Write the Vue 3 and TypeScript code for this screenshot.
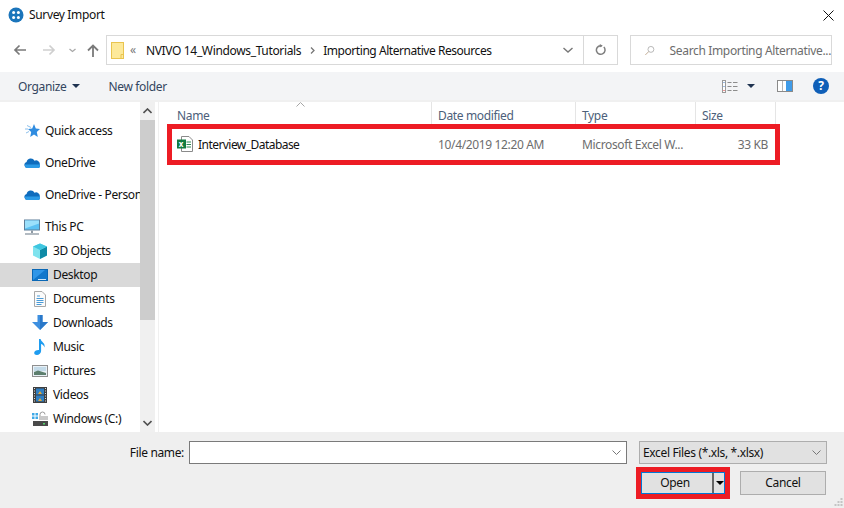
<script setup lang="ts">
type NavItem = { label: string; icon: string; indent?: boolean; group?: boolean; active?: boolean };

const navItems: NavItem[] = [
  { label: "Quick access", icon: "star" },
  { label: "OneDrive", icon: "cloud", group: true },
  { label: "OneDrive - Personal", icon: "cloud", group: true },
  { label: "This PC", icon: "pc", group: true },
  { label: "3D Objects", icon: "cube", indent: true },
  { label: "Desktop", icon: "desktop", indent: true, active: true },
  { label: "Documents", icon: "doc", indent: true },
  { label: "Downloads", icon: "down", indent: true },
  { label: "Music", icon: "music", indent: true },
  { label: "Pictures", icon: "picture", indent: true },
  { label: "Videos", icon: "video", indent: true },
  { label: "Windows (C:)", icon: "drive", indent: true },
];
</script>

<template>
  <div class="dialog">
    <header class="titlebar">
      <svg class="app-icon" width="16" height="16" viewBox="0 0 16 16">
        <circle cx="8" cy="8" r="7.5" fill="#1b75bb" />
        <circle cx="5.6" cy="5.6" r="1.5" fill="#fff" />
        <circle cx="10.4" cy="5.6" r="1.5" fill="#fff" />
        <circle cx="5.6" cy="10.4" r="1.5" fill="#fff" />
        <circle cx="10.4" cy="10.4" r="1.5" fill="#fff" />
      </svg>
      <span class="title">Survey Import</span>
      <svg class="close" width="11" height="11" viewBox="0 0 11 11">
        <path d="M.5.5l10 10M10.5.5l-10 10" stroke="#111" stroke-width="1" fill="none" />
      </svg>
    </header>

    <div class="navbar">
      <div class="nav-buttons">
        <svg width="13" height="12" viewBox="0 0 13 12" class="back">
          <path d="M13 6H2M6.500 1.500L2 6l4.500 4.500" stroke="#7a7a7a" stroke-width="1.700" fill="none" />
        </svg>
        <svg width="13" height="12" viewBox="0 0 13 12" class="forward">
          <path d="M0 6h11M6.500 1.500L11 6l-4.500 4.500" stroke="#cfcfcf" stroke-width="1.700" fill="none" />
        </svg>
        <svg width="7" height="5" viewBox="0 0 7 5" class="recent">
          <path d="M.5 1l3 2.500 3-2.500" stroke="#a8a8a8" stroke-width="1.300" fill="none" />
        </svg>
        <svg width="12" height="13" viewBox="0 0 12 13" class="up">
          <path d="M6 13V2M1 6.500L6 1.500l5 5" stroke="#7a7a7a" stroke-width="1.800" fill="none" />
        </svg>
      </div>
      <div class="address">
        <svg class="folder" width="13" height="17" viewBox="0 0 13 17">
          <rect x=".5" y=".5" width="12" height="16" fill="#fde99a" stroke="#e9c44f" />
          <path d="M10 16.500v-4h2.500" fill="none" stroke="#e9c44f" />
        </svg>
        <span class="chevrons">«</span>
        <span class="crumb">NVIVO 14_Windows_Tutorials</span>
        <svg class="sep" width="5" height="7" viewBox="0 0 5 7">
          <path d="M1 .5l3 3-3 3" stroke="#777" stroke-width="1.300" fill="none" />
        </svg>
        <span class="crumb crumb-last">Importing Alternative Resources</span>
        <svg class="addr-drop" width="10" height="6" viewBox="0 0 10 6">
          <path d="M.5 1l4.500 4 4.500-4" stroke="#777" stroke-width="1.400" fill="none" />
        </svg>
        <div class="refresh">
          <svg width="11" height="12" viewBox="0 0 11 12">
            <path d="M8.800 3a4.300 4.300 0 1 1-3.300-1.300H7" stroke="#7f7f7f" stroke-width="1.500" fill="none" />
            <path d="M4.800 0l3 1.800-3 1.800z" fill="#7f7f7f" />
          </svg>
        </div>
      </div>
      <div class="search">
        <svg width="13" height="13" viewBox="0 0 13 13">
          <circle cx="8" cy="5" r="4" stroke="#a0a0a0" fill="none" />
          <path d="M5 8l-4.500 4.500" stroke="#b59a7c" stroke-width="1.100" />
        </svg>
        <span>Search Importing Alternative...</span>
      </div>
    </div>

    <div class="toolbar">
      <span class="tool">Organize</span>
      <i class="caret organize-caret"></i>
      <span class="tool new-folder">New folder</span>
      <div class="tool-right">
        <svg width="16" height="13" viewBox="0 0 16 13">
          <rect x=".5" y=".5" width="3" height="12" fill="#fff" stroke="#9a9a9a" />
          <rect x="1.500" y="2" width="1" height="1" fill="#3b78c4" />
          <rect x="1.500" y="6" width="1" height="1" fill="#3b78c4" />
          <rect x="1.500" y="10" width="1" height="1" fill="#d33" />
          <path d="M5.500 2.500h4M11 2.500h4.500M5.500 6.500h4M11 6.500h4.500M5.500 10.500h4M11 10.500h4.500" stroke="#8c8c8c" />
        </svg>
        <i class="caret view-caret"></i>
        <svg class="pane" width="16" height="12" viewBox="0 0 16 12">
          <rect x=".5" y=".5" width="15" height="11" fill="#fff" stroke="#8a8a8a" />
          <rect x="9" y="1" width="6" height="10" fill="#3f9be8" />
          <path d="M5.500 1v10" stroke="#b5b5b5" />
        </svg>
        <div class="help">?</div>
      </div>
    </div>

    <main class="body">
      <aside class="sidebar">
        <ul class="nav-list">
          <li
            v-for="item in navItems"
            :key="item.label"
            class="nav-item"
            :class="{ indent: item.indent, group: item.group, active: item.active }"
          >
            <svg class="nav-icon" width="16" height="16" viewBox="0 0 16 16">
              <template v-if="item.icon === 'star'">
                <path d="M10 1l1.800 4.500L16 6l-3.200 3 1 5L10 11.500 6.200 14l1-5L4 6l4.200-.5z" fill="#2f8ce0" />
                <path d="M3 2.500l4 2M1 6h3M2 10l3-1.500" stroke="#8cc0ec" />
              </template>
              <template v-else-if="item.icon === 'cloud'">
                <path d="M3.200 13A3 3 0 0 1 2.600 7.100 4.200 4.200 0 0 1 10.500 5.700 3.800 3.800 0 0 1 15.800 9.800 2.200 2.200 0 0 1 14 13z" fill="#0f6cbd" />
                <path d="M3.200 13A3 3 0 0 1 1 9.500h14.900A2.300 2.300 0 0 1 14 13z" fill="#2b9ae6" />
              </template>
              <template v-else-if="item.icon === 'pc'">
                <rect x=".5" y="1" width="15" height="10" fill="#5cc1f2" stroke="#5f7f99" />
                <path d="M1 1.500h14v3L1 9.500z" fill="#9be0fb" />
                <path d="M8 11.500v2.500" stroke="#8e9aa5" stroke-width="2" />
                <path d="M1 15h14" stroke="#9aa5ae" stroke-width="1.500" />
              </template>
              <template v-else-if="item.icon === 'cube'">
                <path d="M8 .5l7 3v9l-7 3.500-7-3.500v-9z" fill="#7fe3ee" />
                <path d="M8 7l7-3.500v9L8 16z" fill="#0e8aa6" />
                <path d="M8 7L1 3.500 8 .5l7 3z" fill="#3fc6e0" />
              </template>
              <template v-else-if="item.icon === 'desktop'">
                <rect x=".5" y="2.500" width="15" height="11" fill="#2f96e8" stroke="#0a67b5" />
                <path d="M1 13L13 3h2v10z" fill="#1177cc" />
                <path d="M6 12.500h8" stroke="#cfe8fb" />
              </template>
              <template v-else-if="item.icon === 'doc'">
                <path d="M2.500.5H10L13.500 4v11.500h-11z" fill="#fbfbfb" stroke="#a8a8a8" />
                <path d="M5 5h3M4.500 7.500h7M4.500 9.500h7M4.500 11.500h7M4.500 13.500h5" stroke="#4a9bd8" />
              </template>
              <template v-else-if="item.icon === 'down'">
                <path d="M5.500 0h5v7H16l-8 8-8-8h5.500z" fill="#3d8fe0" />
                <path d="M8 0h2.500v7H16l-8 8z" fill="#2a78c9" />
              </template>
              <template v-else-if="item.icon === 'music'">
                <path d="M7 0h1.600c.5 3.200 5 3.700 3.900 8.500-.6-2.100-2.400-3.300-3.400-3.500V12c0 2.200-2 4-4.200 4-1.700 0-2.700-1-2.700-2.300C2.200 12 4.500 10.800 7 11z" fill="#1e9cf0" />
              </template>
              <template v-else-if="item.icon === 'picture'">
                <rect x=".5" y="2.500" width="15" height="11" fill="#e9f1f6" stroke="#8f8f8f" />
                <path d="M2 4h12v4H2z" fill="#c4dbe9" />
                <path d="M2 12V9l4-1.500L14 10v2z" fill="#5d7f6e" />
              </template>
              <template v-else-if="item.icon === 'video'">
                <rect x="1" y="0" width="14" height="16" fill="#3f3f3f" />
                <rect x="4" y="1.500" width="8" height="6" fill="#2f7fc4" />
                <rect x="4" y="8.500" width="8" height="6" fill="#2f7fc4" />
                <path d="M6 7l2-3 2 3zM6 14l2-3 2 3z" fill="#e0a83a" />
                <path d="M2.500 1v14M13.500 1v14" stroke="#ddd" stroke-dasharray="1 1.500" />
              </template>
              <template v-else>
                <rect x="0" y="2" width="2.500" height="2.500" fill="#3fa9e8" />
                <rect x="3.500" y="2" width="2.500" height="2.500" fill="#3fa9e8" />
                <rect x="0" y="5.500" width="2.500" height="2.500" fill="#3fa9e8" />
                <rect x="3.500" y="5.500" width="2.500" height="2.500" fill="#3fa9e8" />
                <path d="M8 6V3.500a2.500 2.500 0 0 1 5 0" stroke="#9a9a9a" fill="none" />
                <rect x="7" y="5" width="9" height="4" fill="#c8c8c8" />
                <rect x="1" y="10" width="15" height="5" fill="#4a4a4a" />
                <rect x="11" y="12" width="2" height="1.500" fill="#57d66d" />
              </template>
            </svg>
            <span class="nav-label">{{ item.label }}</span>
          </li>
        </ul>
      </aside>
      <div class="scrollbar">
        <div class="scroll-btn">
          <svg width="9" height="6" viewBox="0 0 9 6"><path d="M.5 5l4-4 4 4" stroke="#505050" stroke-width="1.600" fill="none" /></svg>
        </div>
        <div class="scroll-thumb"></div>
        <div class="scroll-track"></div>
        <div class="scroll-btn">
          <svg width="9" height="6" viewBox="0 0 9 6"><path d="M.5 1l4 4 4-4" stroke="#505050" stroke-width="1.600" fill="none" /></svg>
        </div>
      </div>

      <section class="files">
        <div class="file-head">
          <div class="col col-name">
            Name
            <svg class="sort" width="9" height="5" viewBox="0 0 9 5"><path d="M.5 4.500l4-4 4 4" stroke="#a6a6a6" fill="none" /></svg>
          </div>
          <div class="col col-date">Date modified</div>
          <div class="col col-type">Type</div>
          <div class="col col-size">Size</div>
        </div>
        <div class="file-row">
          <div class="cell col-name name-cell">
            <svg width="16" height="16" viewBox="0 0 16 16">
              <path d="M4.500.5h7.500l3.500 3.500v11.500h-11z" fill="#fff" stroke="#8a8a8a" />
              <path d="M9.500 6H14M9.500 8.500H14M9.500 11H14" stroke="#2a8a52" />
              <rect x="0" y="3.500" width="9" height="9" fill="#107c41" />
              <text x="1.700" y="10.800" class="excel-x">x</text>
            </svg>
            <span class="file-name">Interview_Database</span>
          </div>
          <div class="cell col-date muted">10/4/2019 12:20 AM</div>
          <div class="cell col-type muted">Microsoft Excel W...</div>
          <div class="cell col-size muted size-cell">33 KB</div>
        </div>
        <div class="mark mark-row"></div>
      </section>
    </main>

    <footer class="footer">
      <div class="footer-line">
        <label class="file-label">File name:</label>
        <div class="file-input">
          <svg width="9" height="5" viewBox="0 0 9 5"><path d="M.5.5l4 4 4-4" stroke="#777" fill="none" /></svg>
        </div>
        <div class="filter">
          <span>Excel Files (*.xls, *.xlsx)</span>
          <svg width="9" height="5" viewBox="0 0 9 5"><path d="M.5.5l4 4 4-4" stroke="#777" fill="none" /></svg>
        </div>
      </div>
      <div class="footer-line buttons">
        <div class="open-wrap">
          <div class="open-btn">
            <span class="open-text">Open</span>
            <span class="open-split"></span>
            <i class="caret open-caret"></i>
          </div>
        </div>
        <button class="cancel">Cancel</button>
      </div>
      <svg class="grip" width="9" height="9" viewBox="0 0 9 9">
        <path d="M6.500 0h2v2h-2zM3.500 3h2v2h-2zM6.500 3h2v2h-2zM.5 6h2v2h-2zM3.500 6h2v2h-2zM6.500 6h2v2h-2z" fill="#c4c4c4" />
      </svg>
    </footer>
  </div>
</template>

<style scoped>
.dialog {
  width: 844px;
  height: 508px;
  background: #fff;
  color: #111;
  font-family: "Noto Sans", "Open Sans", sans-serif;
  font-size: 12px;
  letter-spacing: -0.35px;
  display: flex;
  flex-direction: column;
  overflow: hidden;
}

.titlebar {
  height: 30px;
  display: flex;
  align-items: center;
  padding: 0 10px 0 8px;
}
.title {
  margin: -2px 0 0 5px;
}
.close {
  margin-left: auto;
}

.navbar {
  height: 42px;
  display: flex;
  align-items: flex-start;
  padding-top: 5px;
  box-sizing: border-box;
}
.nav-buttons {
  width: 106px;
  height: 30px;
  display: flex;
  align-items: center;
  flex-shrink: 0;
}
.back {
  margin-left: 13px;
}
.forward {
  margin-left: 17px;
}
.recent {
  margin-left: 13px;
}
.up {
  margin-left: 11px;
}
.address {
  width: 512px;
  height: 30px;
  box-sizing: border-box;
  border: 1px solid #d9d9d9;
  display: flex;
  align-items: center;
  padding-left: 4px;
}
.folder {
  flex-shrink: 0;
}
.chevrons {
  margin: -2px 0 0 6px;
  color: #777;
  width: 16px;
}
.sep {
  margin: 0 8px 0 9px;
}
.crumb-last {
  letter-spacing: -0.45px;
}
.addr-drop {
  margin-left: auto;
  margin-right: 10px;
}
.refresh {
  width: 33px;
  height: 28px;
  border-left: 1px solid #d9d9d9;
  display: flex;
  align-items: center;
  justify-content: center;
}
.search {
  width: 202px;
  height: 30px;
  margin-left: 12px;
  box-sizing: border-box;
  border: 1px solid #d9d9d9;
  display: flex;
  align-items: center;
  padding-left: 14px;
  color: #6d6d6d;
  white-space: nowrap;
  overflow: hidden;
}
.search span {
  margin-left: 15px;
}

.toolbar {
  height: 28px;
  background: #f3f4f6;
  display: flex;
  align-items: center;
  padding-left: 18px;
  color: #33465f;
}
.caret {
  display: block;
  width: 0;
  height: 0;
  border-left: 4px solid transparent;
  border-right: 4px solid transparent;
  border-top: 4px solid #1f3350;
}
.organize-caret {
  margin-left: 6px;
}
.new-folder {
  margin-left: 28px;
}
.tool-right {
  margin-left: auto;
  display: flex;
  align-items: center;
  padding-right: 15px;
}
.view-caret {
  margin-left: 9px;
}
.pane {
  margin-left: 22px;
}
.help {
  width: 16px;
  height: 16px;
  margin-left: 20px;
  border-radius: 50%;
  background: #0f5fb8;
  color: #fff;
  font-weight: 700;
  font-size: 12px;
  line-height: 16px;
  text-align: center;
}

.body {
  height: 332px;
  border-top: 2px solid #f0f0f0;
  box-sizing: border-box;
  display: flex;
}
.sidebar {
  width: 140px;
  flex-shrink: 0;
  overflow: hidden;
}
.nav-list {
  list-style: none;
  margin: 0;
  padding: 17px 0 0;
}
.nav-item {
  height: 24px;
  display: flex;
  align-items: center;
  padding-left: 24px;
  white-space: nowrap;
}
.nav-item.group {
  margin-top: 8px;
}
.nav-item.indent {
  padding-left: 32px;
}
.nav-item.active {
  background: #d9d9d9;
}
.nav-icon {
  flex-shrink: 0;
}
.nav-label {
  margin: -1px 0 0 5px;
}

.scrollbar {
  width: 15px;
  flex-shrink: 0;
  background: #f0f0f0;
  display: flex;
  flex-direction: column;
}
.scroll-btn {
  height: 18px;
  display: flex;
  align-items: center;
  justify-content: center;
}
.scroll-thumb {
  height: 200px;
  background: #cdcdcd;
}
.scroll-track {
  flex: 1;
}

.files {
  flex: 1;
  margin-left: 3px;
  border-left: 1px solid #f0f0f0;
  position: relative;
}
.file-head,
.file-row {
  display: flex;
}
.file-head {
  height: 26px;
  align-items: center;
  color: #4c607a;
}
.col,
.cell {
  box-sizing: border-box;
  padding-left: 6px;
  white-space: nowrap;
}
.col {
  height: 26px;
  line-height: 28px;
  border-right: 1px solid #e5e5e5;
  position: relative;
}
.col-name {
  width: 273px;
  padding-left: 18px;
}
.col-date {
  width: 144px;
}
.col-type {
  width: 120px;
}
.col-size {
  width: 80px;
}
.sort {
  position: absolute;
  left: 137px;
  top: 0;
}
.file-row {
  height: 22px;
  margin-top: 5px;
  align-items: center;
}
.name-cell {
  display: flex;
  align-items: center;
  gap: 5px;
  padding-left: 18px;
}
.file-name {
  letter-spacing: -0.55px;
}
.excel-x {
  font-size: 8px;
  font-weight: 700;
  fill: #fff;
}
.muted {
  color: #6d6d6d;
}
.size-cell {
  text-align: right;
  padding-right: 8px;
}

.mark {
  position: absolute;
  box-sizing: border-box;
  border: 5px solid #ed1c24;
  pointer-events: none;
}
.mark-row {
  left: 8px;
  top: 22px;
  width: 613px;
  height: 41px;
}

.footer {
  flex: 1;
  background: #efefef;
  position: relative;
  display: flex;
  flex-direction: column;
  padding-top: 9px;
  box-sizing: border-box;
}
.footer-line {
  display: flex;
  align-items: center;
}
.file-label {
  width: 189px;
  text-align: right;
  padding-right: 5px;
  box-sizing: border-box;
}
.file-input {
  width: 438px;
  height: 23px;
  box-sizing: border-box;
  border: 1px solid #7a7a7a;
  background: #fff;
  display: flex;
  align-items: center;
  justify-content: flex-end;
  padding-right: 5px;
}
.filter {
  width: 188px;
  height: 23px;
  margin-left: 12px;
  box-sizing: border-box;
  border: 1px solid #adadad;
  background: #e1e1e1;
  display: flex;
  align-items: center;
  justify-content: space-between;
  padding: 0 5px 0 3px;
}
.buttons {
  margin-top: 3px;
  padding-left: 636px;
}
.open-wrap {
  width: 94px;
  height: 32px;
  box-sizing: border-box;
  border: 5px solid #ed1c24;
}
.open-btn {
  height: 100%;
  box-sizing: border-box;
  border: 1px solid #0078d7;
  background: #e1e1e1;
  display: flex;
  align-items: center;
}
.open-text {
  width: 70px;
  padding: 0 4px 1px 0;
  box-sizing: border-box;
  text-align: center;
}
.open-split {
  width: 2px;
  height: 100%;
  background: #666;
}
.open-caret {
  margin-left: 2px;
  border-top-color: #000;
}
.cancel {
  width: 86px;
  height: 24px;
  margin-left: 10px;
  border: 1px solid #adadad;
  background: #e1e1e1;
  color: #111;
  font: inherit;
  letter-spacing: inherit;
  padding: 0 0 2px;
}
.grip {
  position: absolute;
  right: 1px;
  bottom: 1px;
}
</style>
